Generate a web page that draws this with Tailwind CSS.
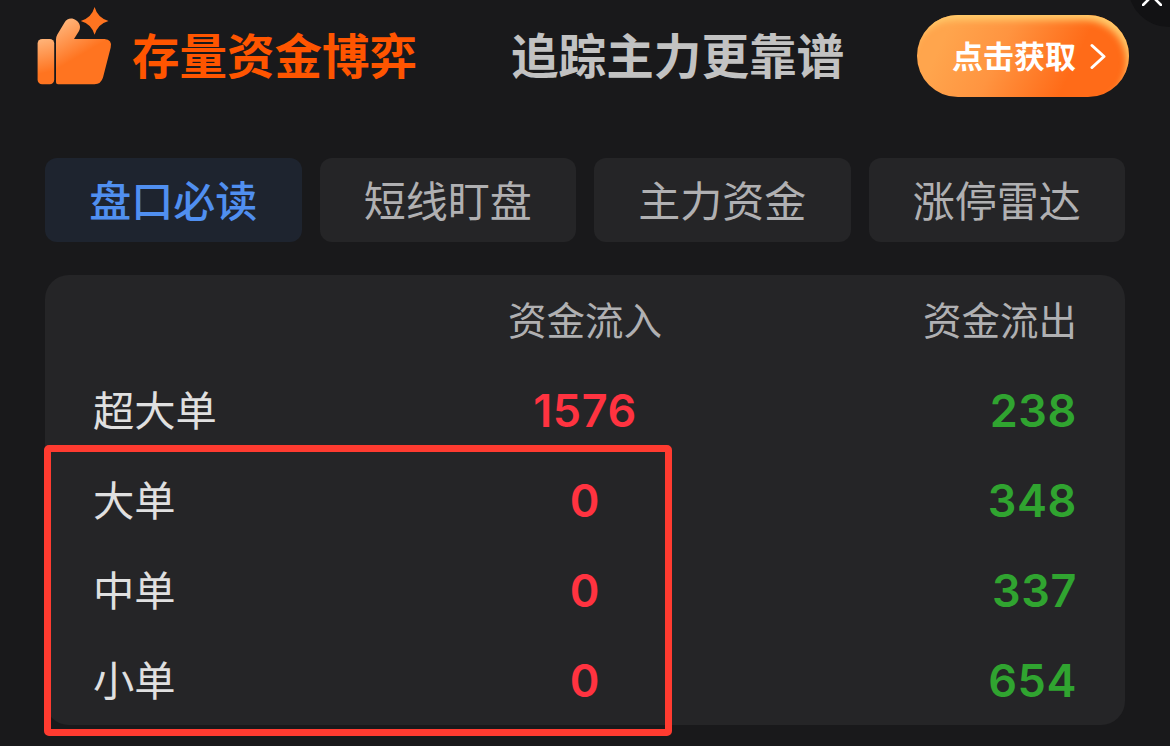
<!DOCTYPE html>
<html lang="zh-CN">
<head>
  <meta charset="UTF-8">
  <title>盘口必读</title>
  <script src="https://cdn.jsdelivr.net/npm/@tailwindcss/browser@4"></script>
</head>
<body class="bg-[#19191b] font-['Noto_Sans_CJK_SC',sans-serif] overflow-hidden">
  <div class="relative w-[1170px] h-[746px] overflow-hidden">

    <!-- Banner -->
    <header class="flex items-center h-[112px] pl-9 pr-10">
      <svg class="w-[78px] h-[80px] shrink-0 -mt-5" viewBox="36 6 78 80">
        <defs>
          <linearGradient id="thumb" gradientUnits="userSpaceOnUse" x1="56" y1="24" x2="76" y2="58">
            <stop offset="0" stop-color="#ffb67c"/>
            <stop offset="1" stop-color="#ff7420"/>
          </linearGradient>
          <linearGradient id="cuff" gradientUnits="userSpaceOnUse" x1="40" y1="38" x2="48" y2="72">
            <stop offset="0" stop-color="#ffb67c"/>
            <stop offset="1" stop-color="#ff7420"/>
          </linearGradient>
        </defs>
        <rect x="37.600" y="39" width="16.600" height="45.200" rx="4.500" fill="url(#cuff)"/>
        <path d="M56 82.200V39.500Q56 37 57.200 34.800L64.400 22.800C67 18.200 72 17.500 76 20.200C80 23 81 27 79 31L74 39H104.500Q112.500 39.500 110.700 47.500L103 77.500Q101 84.200 94.500 84.200H58Q56 84.200 56 82.200Z" fill="url(#thumb)"/>
        <path d="M94.600 7Q97.600 17.900 108.500 20.900Q97.600 23.900 94.600 34.800Q91.600 23.900 80.800 20.900Q91.600 17.900 94.600 7Z" fill="#ff7420"/>
      </svg>
      <h1 class="-mt-[5px] ml-[18px] text-[47.500px] leading-none font-bold text-[#ff5500] whitespace-nowrap">存量资金博弈</h1>
      <p class="-mt-[5px] ml-[94px] text-[47.600px] leading-none font-bold text-[#c2c2c2] whitespace-nowrap">追踪主力更靠谱</p>
      <button class="ml-auto flex items-center w-[212px] h-[82px] mr-px pl-[35px] rounded-full bg-linear-[115deg,#ffa54d_15%,#ff9440_40%,#ff6b18_72%] shadow-[inset_-4px_7px_7px_-2px_#ffcc6c]">
        <span class="-mt-[3px] text-[31px] leading-none font-bold text-white whitespace-nowrap">点击获取</span>
        <svg class="w-4 h-[26px] ml-[14px]" viewBox="0 0 16 26" fill="none" stroke="#fff" stroke-width="3" stroke-linecap="round" stroke-linejoin="round">
          <path d="M2 2.500L14 13.500L2 24.500"/>
        </svg>
      </button>
    </header>

    <!-- Close -->
    <div class="absolute -top-[55px] right-[-40px] size-[82px] rounded-full bg-[#121214]">
      <svg class="absolute left-[14px] top-[41px] w-5 h-5" viewBox="0 0 20 20" fill="none" stroke="#fff" stroke-width="2.600" stroke-linecap="round">
        <path d="M1 1L19 19M19 1L1 19"/>
      </svg>
    </div>

    <!-- Tabs -->
    <nav class="grid grid-cols-4 gap-[18px] mt-[46px] mx-[45px] text-[42px] leading-none text-[#b0b0b2]">
      <button class="h-[84px] pb-[3px] rounded-xl bg-[#1e242f] text-[#508ff0] font-medium">盘口必读</button>
      <button class="h-[84px] pb-[3px] rounded-xl bg-[#252527]">短线盯盘</button>
      <button class="h-[84px] pb-[3px] rounded-xl bg-[#252527]">主力资金</button>
      <button class="h-[84px] pb-[3px] rounded-xl bg-[#252527]">涨停雷达</button>
    </nav>

    <!-- Money flow table -->
    <section class="mt-[33px] mx-[45px] h-[450px] px-12 rounded-3xl bg-[#252527]">
      <table class="w-full table-fixed leading-none">
        <thead class="text-[38.500px] text-[#b0b0b2]">
          <tr class="h-[90px]">
            <th class="w-[390px]"></th>
            <th class="w-[204px] pb-1 font-normal whitespace-nowrap">资金流入</th>
            <th class="pb-1 font-normal text-right whitespace-nowrap">资金流出</th>
          </tr>
        </thead>
        <tbody class="text-[41.300px] text-[#e0e0e0]">
          <tr class="h-[90px]">
            <td class="pb-[3px]">超大单</td>
            <td class="text-center font-['Inter'] font-[560] text-[45px] tracking-[0.6px] text-[#ff3340]">1576</td>
            <td class="text-right font-['Inter'] font-[560] text-[45px] tracking-[0.6px] text-[#30a430]">238</td>
          </tr>
          <tr class="h-[90px]">
            <td class="pb-[3px]">大单</td>
            <td class="text-center font-['Inter'] font-[560] text-[45px] tracking-[0.6px] text-[#ff3340]">0</td>
            <td class="text-right font-['Inter'] font-[560] text-[45px] tracking-[0.6px] text-[#30a430]">348</td>
          </tr>
          <tr class="h-[90px]">
            <td class="pb-[3px]">中单</td>
            <td class="text-center font-['Inter'] font-[560] text-[45px] tracking-[0.6px] text-[#ff3340]">0</td>
            <td class="text-right font-['Inter'] font-[560] text-[45px] tracking-[0.6px] text-[#30a430]">337</td>
          </tr>
          <tr class="h-[90px]">
            <td class="pb-[3px]">小单</td>
            <td class="text-center font-['Inter'] font-[560] text-[45px] tracking-[0.6px] text-[#ff3340]">0</td>
            <td class="text-right font-['Inter'] font-[560] text-[45px] tracking-[0.6px] text-[#30a430]">654</td>
          </tr>
        </tbody>
      </table>
    </section>

    <!-- Highlight box over the zero inflow rows -->
    <div class="absolute left-[44px] top-[445px] w-[628px] h-[291px] border-7 border-[#ff3b30] rounded-[5px]"></div>
  </div>
</body>
</html>
